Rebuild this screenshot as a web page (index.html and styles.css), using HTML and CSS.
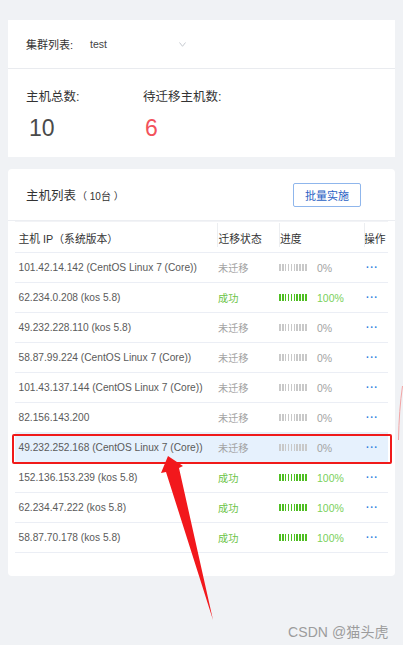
FILE: index.html
```html
<!DOCTYPE html>
<html lang="zh">
<head>
<meta charset="utf-8">
<title>主机列表</title>
<link rel="stylesheet" href="styles.css">
</head>
<body>
<div class="page">
  <section class="card summary">
    <div class="cluster">
      <span class="cluster-label">集群列表:</span>
      <span class="cluster-select">
        <span class="cluster-value">test</span>
        <svg class="chevron" width="7" height="5" viewBox="0 0 7 5"><polyline points="0.5,0.5 3.5,4.3 6.5,0.5" fill="none" stroke="#c0c4cc" stroke-width="0.9"/></svg>
      </span>
    </div>
    <div class="stats">
      <div class="stat">
        <div class="stat-label">主机总数:</div>
        <div class="stat-value">10</div>
      </div>
      <div class="stat">
        <div class="stat-label">待迁移主机数:</div>
        <div class="stat-value red">6</div>
      </div>
    </div>
  </section>

  <section class="card hosts">
    <div class="hosts-head">
      <div class="hosts-title">主机列表<span class="hosts-count">（ 10台 ）</span></div>
      <button class="btn">批量实施</button>
    </div>
    <div class="table">
      <div class="row head">
        <div class="c1">主机 IP（系统版本）</div>
        <div class="c2 sep">迁移状态</div>
        <div class="c3 sep">进度</div>
        <div class="c4 sep">操作</div>
      </div>
      <div class="row"><div class="c1">101.42.14.142 (CentOS Linux 7 (Core))</div><div class="c2 gray">未迁移</div><div class="c3"><span class="bar"></span><span class="pct gray">0%</span></div><div class="c4"><span class="dots">···</span></div></div>
      <div class="row"><div class="c1">62.234.0.208 (kos 5.8)</div><div class="c2 green">成功</div><div class="c3"><span class="bar done"></span><span class="pct lgreen">100%</span></div><div class="c4"><span class="dots">···</span></div></div>
      <div class="row"><div class="c1">49.232.228.110 (kos 5.8)</div><div class="c2 gray">未迁移</div><div class="c3"><span class="bar"></span><span class="pct gray">0%</span></div><div class="c4"><span class="dots">···</span></div></div>
      <div class="row"><div class="c1">58.87.99.224 (CentOS Linux 7 (Core))</div><div class="c2 gray">未迁移</div><div class="c3"><span class="bar"></span><span class="pct gray">0%</span></div><div class="c4"><span class="dots">···</span></div></div>
      <div class="row"><div class="c1">101.43.137.144 (CentOS Linux 7 (Core))</div><div class="c2 gray">未迁移</div><div class="c3"><span class="bar"></span><span class="pct gray">0%</span></div><div class="c4"><span class="dots">···</span></div></div>
      <div class="row"><div class="c1">82.156.143.200</div><div class="c2 gray">未迁移</div><div class="c3"><span class="bar"></span><span class="pct gray">0%</span></div><div class="c4"><span class="dots">···</span></div></div>
      <div class="row selected"><div class="c1">49.232.252.168 (CentOS Linux 7 (Core))</div><div class="c2 gray">未迁移</div><div class="c3"><span class="bar"></span><span class="pct gray">0%</span></div><div class="c4"><span class="dots">···</span></div><span class="mark"></span></div>
      <div class="row"><div class="c1">152.136.153.239 (kos 5.8)</div><div class="c2 green">成功</div><div class="c3"><span class="bar done"></span><span class="pct lgreen">100%</span></div><div class="c4"><span class="dots">···</span></div></div>
      <div class="row"><div class="c1">62.234.47.222 (kos 5.8)</div><div class="c2 green">成功</div><div class="c3"><span class="bar done"></span><span class="pct lgreen">100%</span></div><div class="c4"><span class="dots">···</span></div></div>
      <div class="row"><div class="c1">58.87.70.178 (kos 5.8)</div><div class="c2 green">成功</div><div class="c3"><span class="bar done"></span><span class="pct lgreen">100%</span></div><div class="c4"><span class="dots">···</span></div></div>
    </div>
  </section>
</div>

<svg class="annot" width="403" height="645" viewBox="0 0 403 645">
  <polygon points="168,456 183,466 179,468 213,620 166,472 161,473" fill="#f2181c"/>
  <path d="M402.5,386 Q399,410 398.5,440" fill="none" stroke="#f3a4a4" stroke-width="1"/>
</svg>
<div class="watermark">CSDN @猫头虎</div>
</body>
</html>
```

FILE: styles.css
```css
* { box-sizing: border-box; }
html, body { margin: 0; padding: 0; }
body {
  background: #f0f2f5;
  font-family: "Liberation Sans", "Noto Sans CJK SC", sans-serif;
  color: #333;
  width: 403px;
  height: 645px;
  position: relative;
  overflow: hidden;
}
.page {
  padding: 20px 8px 0 8px;
  display: flex;
  flex-direction: column;
  gap: 12px;
}
.card {
  background: #fff;
}
.summary { height: 137px; display: flex; flex-direction: column; }
.cluster {
  height: 49px;
  border-bottom: 1px solid #e9ebef;
  display: flex;
  align-items: center;
  padding-left: 18px;
  font-size: 11px;
}
.cluster-label { color: #333; width: 64px; }
.cluster-select { display: flex; align-items: center; width: 96px; justify-content: space-between; }
.cluster-value { color: #444; font-size: 10.5px; }
.chevron { margin-top: 1px; }
.stats {
  flex: 1;
  display: flex;
  padding: 20px 0 0 18px;
}
.stat { width: 117px; }
.stat-label { font-size: 12.5px; color: #333; line-height: 16px; }
.stat-value {
  font-size: 23px;
  color: #4a4a4a;
  line-height: 26px;
  margin-top: 10px;
  padding-left: 3px;
}
.stat-value.red { color: #f3525c; padding-left: 2px; }

.hosts {
  border-radius: 4px;
  height: 407px;
  padding: 0 7px;
}
.hosts-head {
  height: 52px;
  border-bottom: 1px solid #eceef2;
  margin: 0 -7px;
  padding: 0 34px 0 18px;
  display: flex;
  align-items: center;
  justify-content: space-between;
}
.hosts-title { font-size: 12.5px; color: #333; }
.hosts-count { font-size: 10px; color: #333; margin-left: 1px; }
.btn {
  width: 68px;
  height: 24px;
  border: 1px solid #8fb6ec;
  border-radius: 2px;
  background: #fff;
  color: #2b62c4;
  font-family: "Liberation Sans", "Noto Sans CJK SC", sans-serif;
  font-size: 11px;
  padding: 0;
  margin-top: 1px;
}
.table { font-size: 10.2px; }
.row {
  display: grid;
  grid-template-columns: 202px 62px 85px 1fr;
  height: 30px;
  border-bottom: 1px solid #ebeef5;
  align-items: center;
  position: relative;
  color: #5a5a5a;
}
.row.head {
  height: 32px;
  color: #333;
  font-size: 10.8px;
  padding-top: 1px;
  border-top: 1px solid #f2f3f6;
}
.row > div { white-space: nowrap; overflow: visible; }
.c1 { padding-left: 3.5px; }
.c2 { padding-left: 1px; }
.c3 { padding-left: 0; display: flex; align-items: center; }
.c4 { padding-left: 2px; }
.head .c4 { padding-left: 0; }
.sep { position: relative; height: 100%; display: flex; align-items: center; }
.sep::before {
  content: "";
  position: absolute;
  left: 0;
  top: 0;
  height: 24px;
  border-left: 1px solid #eceef1;
}
.head .c2 { padding-left: 1.5px; }
.head .c3 { padding-left: 1px; }
.gray { color: #a3a3a3; }
.green { color: #6cc447; }
.lgreen { color: #79d15a; }
.bar {
  display: inline-block;
  width: 29px;
  height: 7px;
  background: repeating-linear-gradient(90deg, #c9c9c9 0 1.6px, transparent 1.6px 2.9px);
}
.bar.done {
  background: repeating-linear-gradient(90deg, #4fbf22 0 1.6px, transparent 1.6px 2.9px);
}
.pct { margin-left: 9px; font-size: 10.5px; }
.dots { color: #2f7fe0; font-size: 10px; font-weight: bold; letter-spacing: 0.8px; }
.row.selected { background: #e6f1fd; }
.mark {
  position: absolute;
  left: -3px;
  right: -4px;
  top: 1px;
  bottom: -2px;
  border: 2px solid #f01a1a;
  border-radius: 2px;
  pointer-events: none;
}
.annot { position: absolute; left: 0; top: 0; pointer-events: none; }
.watermark {
  position: absolute;
  left: 288px;
  top: 621px;
  font-size: 14px;
  color: #9c9c9c;
  letter-spacing: 0.1px;
}
```
